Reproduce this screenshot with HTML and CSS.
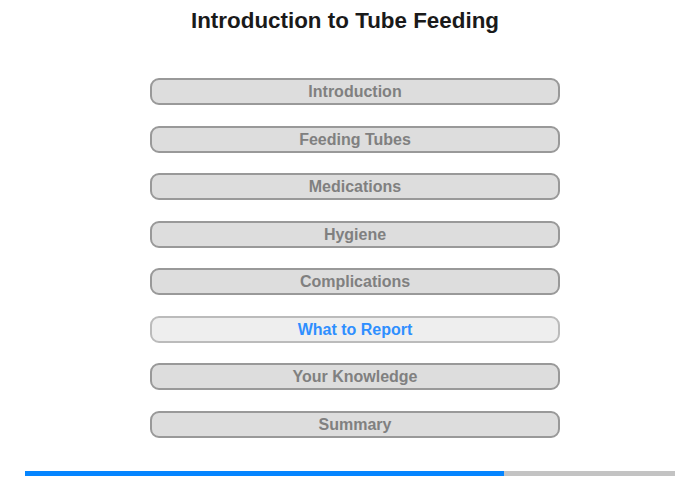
FILE: index.html
```html
<!DOCTYPE html>
<html>
<head>
<meta charset="utf-8">
<link rel="stylesheet" href="styles.css">
</head>
<body>
<div class="page">
  <h1 class="title">Introduction to Tube Feeding</h1>
  <nav class="menu">
    <div class="item">Introduction</div>
    <div class="item">Feeding Tubes</div>
    <div class="item">Medications</div>
    <div class="item">Hygiene</div>
    <div class="item">Complications</div>
    <div class="item active">What to Report</div>
    <div class="item">Your Knowledge</div>
    <div class="item">Summary</div>
  </nav>
  <div class="progress"><div class="progress-fill" style="width:73.7%"></div></div>
</div>
</body>
</html>
```
FILE: styles.css
```css
html, body {
  margin: 0;
  padding: 0;
  background: #fff;
}
.page {
  width: 700px;
  height: 480px;
  font-family: "Liberation Sans", Arial, sans-serif;
  display: flex;
  flex-direction: column;
}
.title {
  margin: 0;
  padding: 8px 10px 0 0;
  height: 25px;
  font-size: 22.4px;
  line-height: 25px;
  font-weight: bold;
  color: #1a1a1a;
  text-align: center;
}
.menu {
  margin: 45px 0 0 150px;
  width: 410px;
  display: flex;
  flex-direction: column;
  gap: 20.5px;
}
.item {
  box-sizing: border-box;
  height: 27px;
  border: 2px solid #999;
  border-radius: 9px;
  background: #ddd;
  color: #808080;
  font-size: 16px;
  font-weight: bold;
  line-height: 23px;
  text-align: center;
}
.item.active {
  background: #eee;
  border-color: #bbb;
  color: #2e8fff;
}
.progress {
  margin: 33px 0 0 25px;
  width: 650px;
  height: 5px;
  background: #c3c3c3;
}
.progress-fill {
  height: 100%;
  background: #0585ff;
}
```
